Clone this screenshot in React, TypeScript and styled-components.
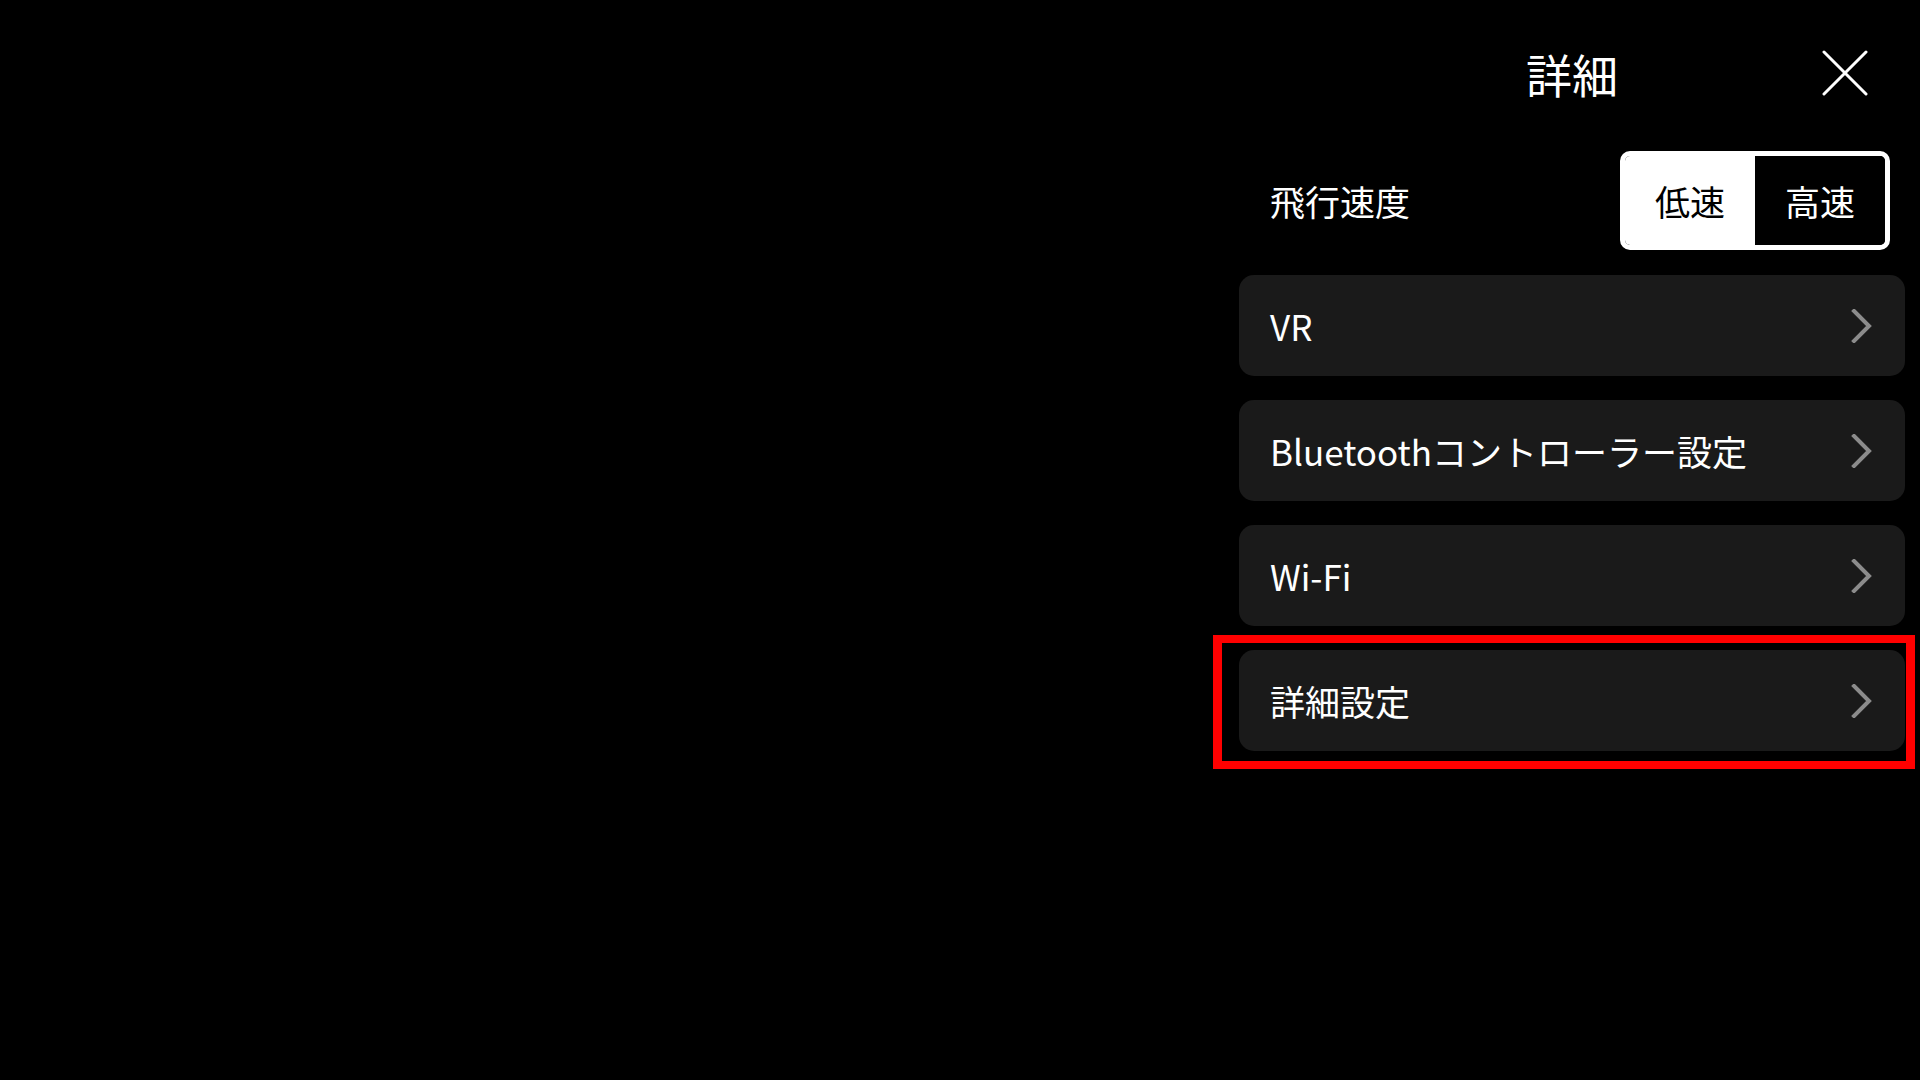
import React, { useState } from "react";
import styled, { createGlobalStyle } from "styled-components";

const GlobalStyle = createGlobalStyle`
  html, body {
    margin: 0;
    padding: 0;
    background: #000;
    width: 100%;
    height: 100%;
  }
  #root {
    height: 100%;
  }
  * { box-sizing: border-box; }
`;

const Screen = styled.div`
  width: 1920px;
  height: 1080px;
  background: #000;
  display: flex;
  justify-content: flex-end;
  font-family: "Noto Sans CJK JP", "Noto Sans", sans-serif;
  color: #fff;
  overflow: hidden;
`;

const Panel = styled.div`
  width: 666px;
  margin-right: 15px;
  padding-top: 33px;
  display: flex;
  flex-direction: column;
`;

const Header = styled.div`
  height: 80px;
  display: grid;
  grid-template-columns: 1fr auto 1fr;
  align-items: center;
`;

const Title = styled.h1`
  grid-column: 2;
  margin: 0;
  font-size: 46px;
  font-weight: 400;
  line-height: 1;
  letter-spacing: 0;
`;

const CloseButton = styled.button`
  grid-column: 3;
  justify-self: end;
  margin-right: 20px;
  width: 80px;
  height: 80px;
  padding: 0;
  border: none;
  background: transparent;
  display: flex;
  align-items: center;
  justify-content: center;
  cursor: pointer;
`;

const SpeedRow = styled.div`
  margin-top: 38px;
  height: 99px;
  padding: 0 15px 0 31px;
  display: flex;
  align-items: center;
  justify-content: space-between;
`;

const Label = styled.span`
  font-size: 35px;
  font-weight: 400;
  line-height: 1;
  color: #fff;
`;

const Segmented = styled.div`
  width: 270px;
  height: 99px;
  border: 5px solid #fff;
  border-radius: 10px;
  display: grid;
  grid-template-columns: 130px 1fr;
  overflow: hidden;
  background: #000;
`;

const Segment = styled.button<{ $active: boolean }>`
  border: none;
  margin: 0;
  padding: 0;
  background: ${(p) => (p.$active ? "#fff" : "#000")};
  color: ${(p) => (p.$active ? "#000" : "#fff")};
  font-family: "Noto Sans CJK JP", "Noto Sans", sans-serif;
  font-size: 35px;
  line-height: 1;
  display: flex;
  align-items: center;
  justify-content: center;
  cursor: pointer;
`;

const List = styled.div`
  margin-top: 25px;
  display: flex;
  flex-direction: column;
  gap: 24px;
`;

const ItemWrap = styled.div`
  position: relative;
`;

const Item = styled.button`
  width: 100%;
  height: 101px;
  border: none;
  border-radius: 15px;
  background: #1a1a1a;
  color: #fff;
  padding: 0 32px 0 31px;
  display: flex;
  align-items: center;
  justify-content: space-between;
  font-family: "Noto Sans CJK JP", "Noto Sans", sans-serif;
  font-size: 35px;
  line-height: 1;
  cursor: pointer;
  text-align: left;
`;

const Highlight = styled.div`
  position: absolute;
  left: -26px;
  right: -10px;
  top: -15px;
  bottom: -18px;
  border: 8px solid #ff0000;
  border-left-width: 9px;
  border-right-width: 9px;
  pointer-events: none;
`;

const Chevron = () => (
  <svg width="22" height="34" viewBox="0 0 22 34" fill="none">
    <path d="M3 2 L18 17 L3 32" stroke="#8c8c8c" strokeWidth="4" strokeLinecap="square" strokeLinejoin="miter" />
  </svg>
);

const CloseIcon = () => (
  <svg width="46" height="46" viewBox="0 0 46 46" fill="none">
    <path d="M2 2 L44 44 M44 2 L2 44" stroke="#fff" strokeWidth="3" strokeLinecap="round" />
  </svg>
);

const items = [
  { label: "VR", highlighted: false },
  { label: "Bluetoothコントローラー設定", highlighted: false },
  { label: "Wi-Fi", highlighted: false },
  { label: "詳細設定", highlighted: true },
];

export default function App() {
  const [speed, setSpeed] = useState<"low" | "high">("low");
  return (
    <>
      <GlobalStyle />
      <Screen>
        <Panel>
          <Header>
            <Title>詳細</Title>
            <CloseButton aria-label="close">
              <CloseIcon />
            </CloseButton>
          </Header>
          <SpeedRow>
            <Label>飛行速度</Label>
            <Segmented>
              <Segment $active={speed === "low"} onClick={() => setSpeed("low")}>
                低速
              </Segment>
              <Segment $active={speed === "high"} onClick={() => setSpeed("high")}>
                高速
              </Segment>
            </Segmented>
          </SpeedRow>
          <List>
            {items.map((it) => (
              <ItemWrap key={it.label}>
                <Item>
                  <span>{it.label}</span>
                  <Chevron />
                </Item>
                {it.highlighted && <Highlight />}
              </ItemWrap>
            ))}
          </List>
        </Panel>
      </Screen>
    </>
  );
}
